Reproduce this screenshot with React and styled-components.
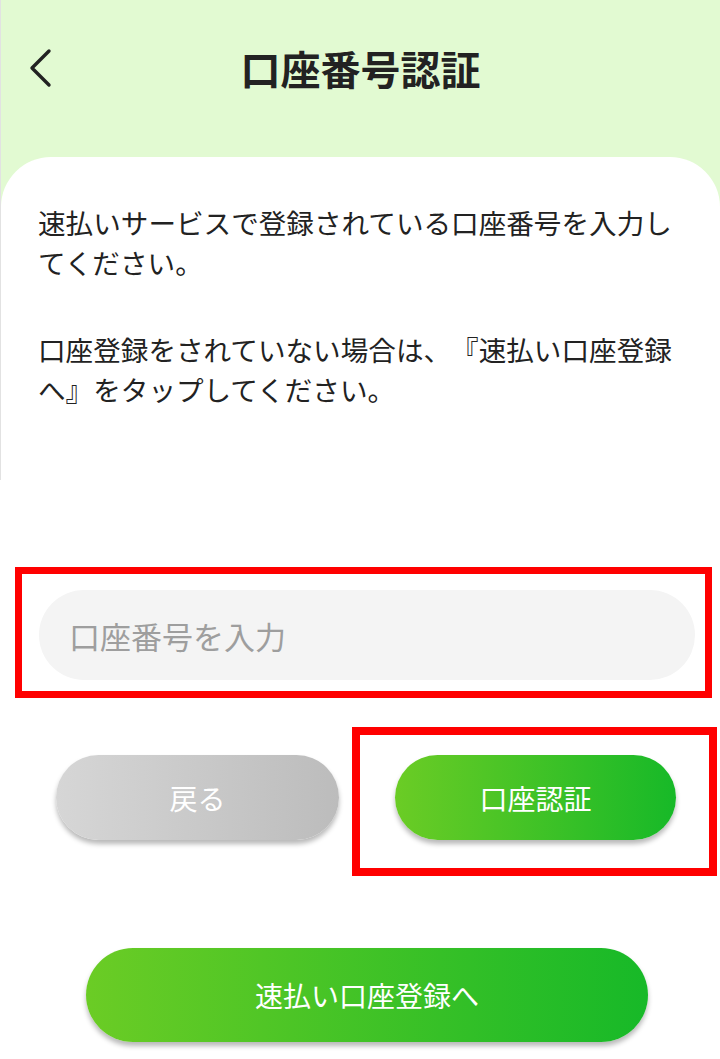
import React from 'react';
import styled, { createGlobalStyle } from 'styled-components';

const GlobalStyle = createGlobalStyle`
	html, body {
		margin: 0;
		padding: 0;
		background: #ffffff;
	}

	* {
		box-sizing: border-box;
	}

	body {
		font-family: 'Noto Sans CJK JP', 'Noto Sans', sans-serif;
		color: #222222;
		text-spacing-trim: space-all;
	}
`;

const Page = styled.div`
	display: flex;
	flex-direction: column;

	width: 720px;
	min-height: 1059px;

	background: #ffffff;
`;

const Top = styled.section`
	display: flex;
	flex-direction: column;

	border-left: 1px solid #e2e2e2;
	background: #e2fad2;
`;

const Header = styled.header`
	display: grid;
	grid-template-columns: 1fr auto 1fr;
	align-items: center;

	height: 157px;
	padding-bottom: 22px;
`;

const BackButton = styled.button`
	justify-self: start;
	display: flex;
	align-items: center;

	margin-left: 26px;
	padding: 0;
	border: none;

	background: none;
	color: #222222;
	cursor: pointer;
`;

const Title = styled.h1`
	margin: 0;

	font-size: 40px;
	font-weight: 700;
	line-height: 1;
	color: #222222;
`;

const Card = styled.div`
	min-height: 323px;
	padding: 45px 37px 0 37px;
	border-radius: 50px 50px 0 0;

	background: #ffffff;
`;

const Paragraph = styled.p`
	margin: 0 0 47px;

	font-size: 27.6px;
	line-height: 40px;
	color: #222222;
	text-spacing-trim: space-all;

	&:last-child {
		margin-bottom: 0;
	}
`;

const Highlight = styled.div`
	border: ${({ $stroke }) => $stroke}px solid #ff0000;
	padding: ${({ $pad }) => $pad};
`;

const InputFrame = styled(Highlight)`
	margin: 87px 8px 0 15px;
`;

const AccountInput = styled.input`
	display: block;

	width: 100%;
	height: 90px;
	padding: 0 30px;
	border: none;
	border-radius: 45px;

	background: #f4f4f4;

	font-family: inherit;
	font-size: 31px;
	color: #222222;

	&::placeholder {
		color: #9e9e9e;
	}

	&:focus {
		outline: none;
	}
`;

const ButtonRow = styled.div`
	display: flex;
	align-items: flex-start;

	margin-top: 29px;
	padding-left: 56px;
`;

const PillButton = styled.button`
	display: flex;
	align-items: center;
	justify-content: center;

	width: ${({ $width }) => $width}px;
	height: ${({ $height }) => $height}px;
	padding: 0;
	border: none;
	border-radius: 999px;

	background: ${({ $tone }) =>
		$tone === 'gray'
			? 'linear-gradient(90deg, #d6d6d6 0%, #bcbcbc 100%)'
			: 'linear-gradient(90deg, #6bcc25 0%, #17b928 100%)'};
	box-shadow: 0 4px 5px rgba(0, 0, 0, 0.28);

	font-family: inherit;
	font-size: 28px;
	font-weight: 400;
	color: #ffffff;
	cursor: pointer;
`;

const BackPill = styled(PillButton)`
	margin-top: 28px;
`;

const VerifyFrame = styled(Highlight)`
	margin-left: 13px;
`;

const RegisterPill = styled(PillButton)`
	margin: 72px 0 0 86px;
`;

function ChevronLeft() {
	return (
		<svg width="26" height="40" viewBox="0 0 26 40" fill="none">
			<polyline
				points="22,3 5,20 22,37"
				stroke="currentColor"
				strokeWidth="3.4"
				strokeLinecap="round"
				strokeLinejoin="round"
			/>
		</svg>
	);
}

function App() {
	return (
		<>
			<GlobalStyle />
			<Page>
				<Top>
					<Header>
						<BackButton aria-label="戻る">
							<ChevronLeft />
						</BackButton>
						<Title>口座番号認証</Title>
					</Header>
					<Card>
						<Paragraph>速払いサービスで登録されている口座番号を入力してください。</Paragraph>
						<Paragraph>口座登録をされていない場合は、『速払い口座登録へ』をタップしてください。</Paragraph>
					</Card>
				</Top>

				<InputFrame $stroke={7} $pad="16px 10px 11px 17px">
					<AccountInput placeholder="口座番号を入力" />
				</InputFrame>

				<ButtonRow>
					<BackPill $tone="gray" $width={283} $height={85}>
						戻る
					</BackPill>
					<VerifyFrame $stroke={8} $pad="20px 33px 28px 35px">
						<PillButton $tone="green" $width={281} $height={85}>
							口座認証
						</PillButton>
					</VerifyFrame>
				</ButtonRow>

				<RegisterPill $tone="green" $width={562} $height={94}>
					速払い口座登録へ
				</RegisterPill>
			</Page>
		</>
	);
}

export default App;
